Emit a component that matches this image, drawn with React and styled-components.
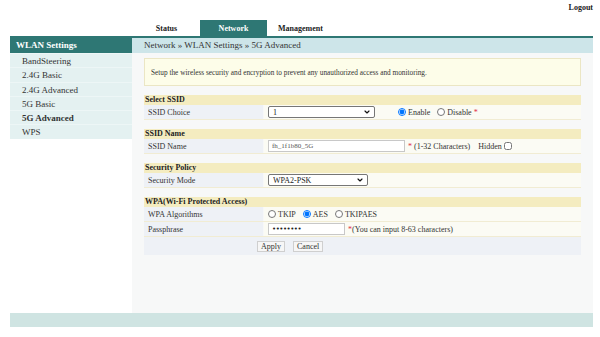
import React from 'react';
import styled, { createGlobalStyle } from 'styled-components';
import { ChevronDown } from 'lucide-react';

const GlobalStyle = createGlobalStyle`
  body {
    margin: 0;
    background: #fff;
    font-family: "Liberation Serif", "Times New Roman", serif;
    color: #222;
  }
`;

const TEAL = '#2e7774';

const sideItems = ['BandSteering', '2.4G Basic', '2.4G Advanced', '5G Basic', '5G Advanced', 'WPS'];

// select with the small dark chevron of the reference
const Dropdown = ({ width, children, defaultValue }) => (
  <SelectWrap $width={width}>
    <Select defaultValue={defaultValue}>{children}</Select>
    <Arrow>
      <ChevronDown size={8} strokeWidth={3.5} />
    </Arrow>
  </SelectWrap>
);

const App = () => {
  return (
    <>
      <GlobalStyle />
      <Page>
        <TopBar>
          <Logout>Logout</Logout>
        </TopBar>
        <TabBar>
          <Tab>Status</Tab>
          <Tab $active>Network</Tab>
          <Tab>Management</Tab>
        </TabBar>
        <Layout>
          <Sidebar>
            <SideHeader>WLAN Settings</SideHeader>
            {sideItems.map((item) => (
              <SideItem key={item} $active={item === '5G Advanced'}>{item}</SideItem>
            ))}
          </Sidebar>
          <Main>
            <Breadcrumb>Network » WLAN Settings » 5G Advanced</Breadcrumb>
            <Content>
              <InfoBox>
                Setup the wireless security and encryption to prevent any unauthorized access and monitoring.
              </InfoBox>

              <Section>
                <SectionHeader>Select SSID</SectionHeader>
                <Row>
                  <LabelCell>SSID Choice</LabelCell>
                  <ValueCell>
                    <Dropdown width={107} defaultValue="1">
                      <option value="1">1</option>
                    </Dropdown>
                    <RadioGroup $offset={23}>
                      <RadioLabel><Radio name="enable" defaultChecked />Enable</RadioLabel>
                      <RadioLabel><Radio name="enable" />Disable{'\u00a0'}<Req>*</Req></RadioLabel>
                    </RadioGroup>
                  </ValueCell>
                </Row>
              </Section>

              <Section>
                <SectionHeader>SSID Name</SectionHeader>
                <Row>
                  <LabelCell>SSID Name</LabelCell>
                  <ValueCell>
                    <TextInput $width={137} defaultValue="fh_1f1b80_5G" />
                    <Hint><Req>*</Req> (1-32 Characters)</Hint>
                    <Hidden>Hidden <Check type="checkbox" /></Hidden>
                  </ValueCell>
                </Row>
              </Section>

              <Section>
                <SectionHeader>Security Policy</SectionHeader>
                <Row>
                  <LabelCell>Security Mode</LabelCell>
                  <ValueCell>
                    <Dropdown width={100} defaultValue="wpa2">
                      <option value="wpa2">WPA2-PSK</option>
                    </Dropdown>
                  </ValueCell>
                </Row>
              </Section>

              <Section>
                <SectionHeader>WPA(Wi-Fi Protected Access)</SectionHeader>
                <Row>
                  <LabelCell>WPA Algorithms</LabelCell>
                  <ValueCell>
                    <RadioGroup $offset={0}>
                      <RadioLabel><Radio name="alg" />TKIP</RadioLabel>
                      <RadioLabel><Radio name="alg" defaultChecked />AES</RadioLabel>
                      <RadioLabel><Radio name="alg" />TKIPAES</RadioLabel>
                    </RadioGroup>
                  </ValueCell>
                </Row>
                <Row>
                  <LabelCell>Passphrase</LabelCell>
                  <ValueCell>
                    <PassInput type="password" defaultValue="12345678" />
                    <Hint><Req>*</Req>(You can input 8-63 characters)</Hint>
                  </ValueCell>
                </Row>
                <ButtonRow>
                  <Button>Apply</Button>
                  <Button>Cancel</Button>
                </ButtonRow>
              </Section>
            </Content>
          </Main>
        </Layout>
        <Footer />
      </Page>
    </>
  );
};

const Page = styled.div`
  width: 583px;
  margin-left: 10px;
`;

const TopBar = styled.div`
  height: 20px;
  display: flex;
  justify-content: flex-end;
  align-items: flex-start;
`;

const Logout = styled.span`
  font-size: 8px;
  font-weight: bold;
  padding-top: 3px;
`;

const TabBar = styled.div`
  height: 18px;
  box-sizing: border-box;
  display: flex;
  padding-left: 123px;
  border-bottom: 2px solid ${TEAL};
`;

const Tab = styled.div`
  width: 67px;
  display: flex;
  align-items: center;
  justify-content: center;
  font-size: 8px;
  font-weight: bold;
  background: ${(p) => (p.$active ? TEAL : 'transparent')};
  color: ${(p) => (p.$active ? '#fff' : '#222')};
`;

const Layout = styled.div`
  display: flex;
  height: 275px;
`;

const Sidebar = styled.div`
  width: 122px;
  flex-shrink: 0;
`;

const SideHeader = styled.div`
  height: 15px;
  background: ${TEAL};
  color: #fff;
  font-size: 9px;
  font-weight: bold;
  line-height: 15px;
  padding-left: 6px;
`;

const SideItem = styled.div`
  height: 13.3px;
  line-height: 14px;
  padding-left: 12px;
  font-size: 9px;
  background: #e4f1f1;
  border-top: 1px solid #edf6f6;
  font-weight: ${(p) => (p.$active ? 'bold' : 'normal')};
  color: #333;
`;

const Main = styled.div`
  flex: 1;
  background: #f7f8f8;
`;

const Breadcrumb = styled.div`
  height: 15px;
  line-height: 15px;
  background: #cde5e9;
  padding-left: 12px;
  font-size: 9px;
  color: #333;
`;

const Content = styled.div`
  padding: 5px 12px 0;
`;

const InfoBox = styled.div`
  height: 28px;
  box-sizing: border-box;
  border: 1px solid #ebe6c4;
  background: #fdfde9;
  display: flex;
  align-items: center;
  padding-left: 6px;
  font-size: 7.3px;
  color: #333;
`;

const Section = styled.div`
  margin-top: 9px;
`;

const SectionHeader = styled.div`
  height: 10px;
  line-height: 10px;
  background: #f4ecc0;
  font-size: 8px;
  font-weight: bold;
  padding-left: 1px;
`;

const Row = styled.div`
  display: grid;
  grid-template-columns: 119px 1fr;
  column-gap: 1px;
  height: 15px;
  box-sizing: border-box;
  border-bottom: 1px solid #f1ecd3;
`;

const LabelCell = styled.div`
  background: #eef1f6;
  padding-left: 4px;
  display: flex;
  align-items: center;
  font-size: 8px;
  color: #333;
`;

const ValueCell = styled.div`
  background: #fbfbf4;
  padding-left: 4px;
  display: flex;
  align-items: center;
  font-size: 8px;
  color: #333;
`;

const SelectWrap = styled.div`
  position: relative;
  width: ${(p) => p.$width}px;
  height: 12px;
`;

const Select = styled.select`
  appearance: none;
  width: 100%;
  height: 12px;
  box-sizing: border-box;
  font-family: "Liberation Serif", serif;
  font-size: 8px;
  color: #222;
  padding: 0 0 0 4px;
  border: 1px solid #767676;
  border-radius: 2px;
  background: #fff;
`;

const Arrow = styled.span`
  position: absolute;
  right: 4px;
  top: 2px;
  display: flex;
  color: #111;
  pointer-events: none;
`;

const TextInput = styled.input`
  width: ${(p) => p.$width}px;
  height: 12px;
  box-sizing: border-box;
  font-family: "Liberation Serif", serif;
  font-size: 7px;
  color: #555;
  padding: 0 0 0 3px;
  border: 1px solid #c8c8c8;
  background: #fff;
`;

const PassInput = styled(TextInput).attrs({ $width: 77 })`
  font-family: "DejaVu Sans", sans-serif;
  font-size: 7px;
  color: #222;
  letter-spacing: -0.5px;
`;

const RadioGroup = styled.div`
  display: flex;
  align-items: center;
  gap: 7px;
  margin-left: ${(p) => p.$offset}px;
`;

const RadioLabel = styled.label`
  display: flex;
  align-items: center;
  font-size: 8px;
`;

const Radio = styled.input.attrs({ type: 'radio' })`
  width: 8px;
  height: 8px;
  margin: 0 2px 0 0;
`;

const Req = styled.span`
  color: #e0304a;
`;

const Hint = styled.span`
  margin-left: 3px;
  font-size: 8px;
`;

const Hidden = styled.label`
  display: flex;
  align-items: center;
  margin-left: 8px;
  font-size: 8px;
`;

const Check = styled.input`
  width: 8px;
  height: 8px;
  margin: 0 0 0 2px;
`;

const ButtonRow = styled.div`
  height: 18px;
  background: #eef1f6;
  display: flex;
  align-items: center;
  gap: 8px;
  padding-left: 113px;
`;

const Button = styled.button`
  height: 11px;
  padding: 0 3px;
  font-family: "Liberation Serif", serif;
  font-size: 8px;
  line-height: 9px;
  border: 1px solid #cfcfcf;
  background: #f6f6f6;
  color: #333;
`;

const Footer = styled.div`
  height: 14px;
  background: #cfe4e2;
`;

export default App;
